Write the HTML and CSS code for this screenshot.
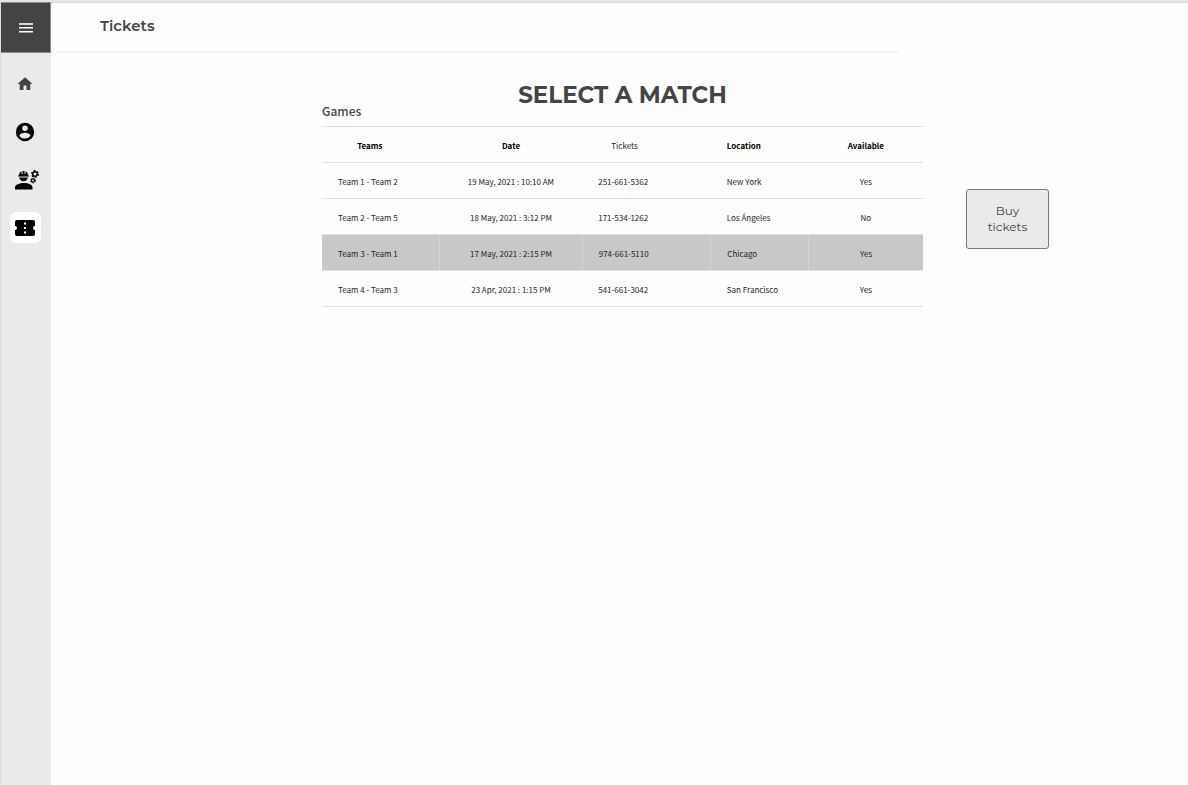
FILE: index.html
```html
<!DOCTYPE html>
<html lang="en">
<head>
<meta charset="utf-8">
<title>Tickets</title>
<meta name="viewport" content="width=device-width, initial-scale=1">
<link rel="stylesheet" href="styles.css">
</head>
<body>
<div class="app">
  <aside class="sidebar">
    <button class="menu-button" type="button" aria-label="Menu">
      <svg width="14" height="10" viewBox="0 0 14 10" fill="#fff"><path fill="#d8d8d8" d="M0 0h14v2H0z"/><path d="M0 4h14v1.500H0zM0 8h14v1.500H0z"/></svg>
    </button>
    <nav class="nav" aria-label="Main">
      <a class="nav-link nav-link-home" href="#" aria-label="Home">
        <svg width="18" height="18" viewBox="0 0 24 24" fill="currentColor"><path d="M10 20v-6h4v6h5v-8h3L12 3 2 12h3v8z"/></svg>
      </a>
      <a class="nav-link" href="#" aria-label="Account">
        <svg width="22" height="22" viewBox="0 0 24 24" fill="currentColor"><path d="M12 2a10 10 0 1 0 0 20 10 10 0 0 0 0-20zm0 3a3 3 0 1 1 0 6 3 3 0 0 1 0-6zm0 14.200a7.200 7.200 0 0 1-6-3.220c.03-1.990 4-3.080 6-3.080s5.970 1.090 6 3.080a7.200 7.200 0 0 1-6 3.220z"/></svg>
      </a>
      <a class="nav-link nav-link-staff" href="#" aria-label="Staff">
        <svg width="26" height="22" viewBox="0 0 26 22" fill="currentColor">
          <path d="M1 20.500v-2c0-3 4.500-4.500 9-4.500s8.500 1.500 8.500 4.500v2z"/>
          <path d="M5 6.500C5 4.500 6 3 7.500 2.300V5h1V2h2v3h1V2.300C13 3 14 4.500 14 6.500h1v1H4v-1zM5.200 8.500h8.600c-.4 2.200-2 3.700-4.300 3.700s-3.900-1.500-4.300-3.700z"/>
          <g fill="none" stroke="currentColor"><circle cx="21" cy="5" r="2.300" stroke-width="1.500"/><circle cx="21" cy="5" r="3.300" stroke-width="1.300" stroke-dasharray="1.730 1.730"/><circle cx="19" cy="11.500" r="1.600" stroke-width="1.200"/><circle cx="19" cy="11.500" r="2.400" stroke-width="1" stroke-dasharray="1.260 1.260"/></g>
        </svg>
      </a>
      <a class="nav-link nav-link-active" href="#" aria-label="Tickets" aria-current="page">
        <svg width="20" height="16" viewBox="0 0 20 16" fill="currentColor"><path fill-rule="evenodd" d="M2 0h16a2 2 0 0 1 2 2v4a2 2 0 0 0 0 4v4a2 2 0 0 1-2 2H2a2 2 0 0 1-2-2v-4a2 2 0 0 0 0-4V2a2 2 0 0 1 2-2zm7 2.500v2h2v-2zM9 7v2h2V7zm0 4.500v2h2v-2z"/></svg>
      </a>
    </nav>
  </aside>
  <div class="page">
    <header class="topbar"><p class="topbar-title">Tickets</p></header>
    <main class="content">
      <section class="games">
        <div class="games-head">
          <h2 class="games-label" id="games-label">Games</h2>
          <h1 class="games-title">SELECT A MATCH</h1>
        </div>
        <table class="table" aria-labelledby="games-label">
          <colgroup><col class="col-teams"><col class="col-date"><col class="col-tickets"><col class="col-location"><col class="col-available"></colgroup>
          <thead>
            <tr><th class="head-teams">Teams</th><th>Date</th><th class="head-tickets">Tickets</th><th class="left">Location</th><th>Available</th></tr>
          </thead>
          <tbody>
            <tr><td class="left">Team 1 - Team 2</td><td>19 May, 2021 : 10:10 AM</td><td class="left">251-661-5362</td><td class="left">New York</td><td>Yes</td></tr>
            <tr><td class="left">Team 2 - Team 5</td><td>18 May, 2021 : 3:12 PM</td><td class="left">171-534-1262</td><td class="left">Los Ángeles</td><td>No</td></tr>
            <tr class="selected"><td class="left">Team 3 - Team 1</td><td>17 May, 2021 : 2:15 PM</td><td class="left">974-661-5110</td><td class="left">Chicago</td><td>Yes</td></tr>
            <tr><td class="left">Team 4 - Team 3</td><td>23 Apr, 2021 : 1:15 PM</td><td class="left">541-661-3042</td><td class="left">San Francisco</td><td>Yes</td></tr>
          </tbody>
        </table>
      </section>
      <div class="actions"><button class="buy-button" type="button">Buy<br>tickets</button></div>
    </main>
  </div>
</div>
</body>
</html>
```
FILE: styles.css
```css
* { box-sizing: border-box; }

body {
  margin: 0;
  background: #fefefe;
  color: #444;
  font-family: Montserrat, Inter, sans-serif;
}

.app {
  display: flex;
  min-height: 100vh;
  border-top: 2px solid #e6e6e6;
}

.sidebar {
  flex: none;
  width: 51px;
  background: #eaeaea;
  border-left: 1px solid #dcdcdc;
}

.menu-button {
  display: flex;
  align-items: center;
  justify-content: center;
  width: 100%;
  height: 51px;
  padding: 0;
  border: 1px solid #8c8c8c;
  border-left: 0;
  background: #444;
}

.nav {
  display: flex;
  flex-direction: column;
  align-items: center;
  gap: 17px;
  padding: 15px 2px 0 0;
}

.nav-link {
  display: flex;
  align-items: center;
  justify-content: center;
  width: 31px;
  height: 31px;
  border-radius: 6px;
  color: #000;
}

.nav-link-home { color: #444; }
.nav-link-staff { padding-left: 4px; }
.nav-link-staff svg { flex: none; }
.nav-link-active { background: #fff; }

.page {
  flex: 1;
  min-width: 0;
  border-top: 1px solid #dadada;
}

.topbar {
  width: 74.5%;
  height: 50px;
  padding: 13px 0 0 49px;
  border-bottom: 2px solid #f5f5f5;
}

.topbar-title {
  margin: 0;
  font-size: 15px;
  font-weight: 600;
  line-height: 20px;
}

.content {
  display: grid;
  grid-template-columns: 271fr 601fr 265fr;
  padding-top: 23px;
}

.games { grid-column: 2; }

.games-head {
  display: grid;
  grid-template-columns: 1fr auto 1fr;
  height: 50px;
}

.games-label {
  align-self: end;
  margin: 0 0 5px;
  font-family: "Source Sans Pro", "Noto Sans CJK SC", sans-serif;
  font-size: 12px;
  font-weight: 500;
  line-height: 20px;
}

.games-title {
  margin: 0;
  font-size: 23px;
  font-weight: 700;
  line-height: 38px;
  white-space: nowrap;
}

.table {
  width: 100%;
  table-layout: fixed;
  border-collapse: collapse;
  border-top: 1px solid #e0e0e0;
  color: #222;
  font-family: "Source Sans Pro", "Noto Sans CJK SC", sans-serif;
  font-size: 8px;
  line-height: 14px;
}

.col-teams { width: 19.6%; }
.col-date { width: 23.7%; }
.col-tickets { width: 21.4%; }
.col-location { width: 16.3%; }
.col-available { width: 19%; }

.table th,
.table td {
  height: 36px;
  padding: 2px 16px 0;
  border-bottom: 1px solid #e0e0e0;
  text-align: center;
  white-space: nowrap;
}

.table th { color: #000; font-weight: 700; }
.table .left { text-align: left; }
.table .head-teams { padding-right: 38px; }
.table .head-tickets { padding-right: 60px; color: #222; font-weight: 400; }
.selected { background: #c8c8c8; }
.table .selected td + td { border-left: 1px solid #d4d4d4; }

.actions { padding: 113px 0 0 43px; }

.buy-button {
  width: 83px;
  height: 60px;
  padding: 0;
  border: 1px solid #777;
  border-radius: 3px;
  background: #eaeaea;
  color: #444;
  font-family: inherit;
  font-size: 12px;
  line-height: 16px;
}
```
